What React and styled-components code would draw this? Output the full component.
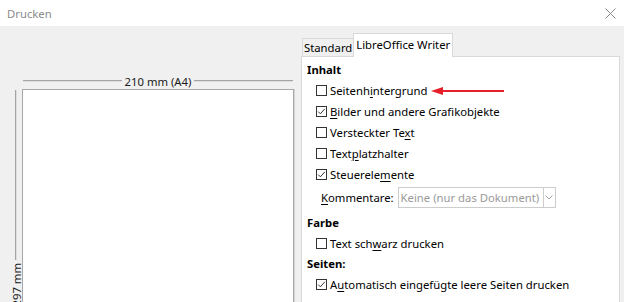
import React from "react";
import styled, { createGlobalStyle } from "styled-components";

const GlobalStyle = createGlobalStyle`
    html, body {
        margin: 0;
        padding: 0;
        background: #f0f0f0;
    }
    body {
        font-family: "Noto Sans", "Open Sans", sans-serif;
        font-size: 11.3px;
        color: #000000;
        overflow: hidden;
    }
`;

const WindowStyled = styled.div`
    width: 624px;
    height: 302px;
    display: flex;
    flex-direction: column;
    overflow: hidden;
    background: #f0f0f0;
`;

const TitleBar = styled.div`
    height: 26px;
    flex: none;
    background: #ffffff;
    display: flex;
    align-items: center;
    justify-content: space-between;
    padding: 0 8px 0 7px;
`;

const TitleText = styled.span`
    color: #8c8c8c;
    font-size: 11.3px;
`;

const BodyStyled = styled.div`
    flex: 1;
    min-height: 0;
    display: flex;
    gap: 7px;
    padding: 7px 4px 0 10px;
`;

const PreviewPane = styled.div`
    display: grid;
    grid-template-columns: 12px 272px;
    grid-template-rows: 16px auto;
    align-items: start;
    padding-top: 40px;
`;

const HDim = styled.div`
    grid-column: 2;
    grid-row: 1;
    height: 16px;
    display: flex;
    align-items: center;
    gap: 3px;
    padding: 0 1px;
    color: #1a1a1a;

    &::before, &::after {
        content: "";
        flex: 1;
        border-top: 1px solid #a4a4a4;
        border-bottom: 1px solid #dedede;
    }
`;

const VDim = styled.div`
    grid-column: 1;
    grid-row: 2;
    height: 216px;
    margin-top: 1px;
    display: flex;
    flex-direction: column;
    align-items: center;
    gap: 3px;
    color: #1a1a1a;

    &::before {
        content: "";
        flex: 1;
        border-left: 1px solid #a4a4a4;
        border-right: 1px solid #dedede;
    }
`;

const VDimText = styled.span`
    writing-mode: vertical-rl;
    transform: rotate(180deg);
    white-space: nowrap;
`;

const Page = styled.div`
    grid-column: 2;
    grid-row: 2;
    height: 400px;
    background: #ffffff;
    border: 1px solid #a8a8a8;
    box-shadow: 1px 0 0 #d4d4d4;
`;

const TabsPane = styled.div`
    flex: 1;
    display: flex;
    flex-direction: column;
    min-width: 0;
`;

const TabRow = styled.div`
    height: 23px;
    flex: none;
    display: flex;
    align-items: flex-end;
    padding-left: 1px;
`;

const Tab = styled.div`
    position: relative;
    z-index: 1;
    height: ${(p) => (p.$active ? "24px" : "18px")};
    margin-bottom: ${(p) => (p.$active ? "-1px" : "0")};
    background: ${(p) => (p.$active ? "#ffffff" : "#f0f0f0")};
    border: 1px solid #d9d9d9;
    border-bottom: none;
    border-right: ${(p) => (p.$active ? "1px solid #d9d9d9" : "none")};
    padding: ${(p) => (p.$active ? "2px 2px 0 2px" : "0 1px 0 1px")};
    box-sizing: border-box;
    line-height: 17px;
    white-space: nowrap;
`;

const TabPanel = styled.div`
    flex: 1;
    background: #ffffff;
    border: 1px solid #d9d9d9;
    border-bottom: none;
    padding: 3px 0 0 5px;
`;

const SectionTitle = styled.div`
    height: 20px;
    line-height: 20px;
    font-weight: 700;
    margin-top: ${(p) => p.$gap || "0"};
`;

const CheckRow = styled.div`
    height: 21px;
    display: flex;
    align-items: center;
    padding-left: 9px;
    white-space: nowrap;
`;

const Box = styled.span`
    width: 11px;
    height: 11px;
    box-sizing: border-box;
    border: 1px solid #333333;
    background: #ffffff;
    margin-right: 3px;
    flex: none;
    display: flex;
    align-items: center;
    justify-content: center;
`;

const Key = styled.u`
    text-decoration-thickness: 1px;
    text-underline-offset: 2px;
`;

const ComboRow = styled.div`
    height: 24px;
    display: flex;
    align-items: center;
    padding-left: 14px;
    white-space: nowrap;
`;

const Combo = styled.div`
    margin-left: 4px;
    width: 158px;
    height: 21px;
    box-sizing: border-box;
    border: 1px solid #cccccc;
    display: flex;
    align-items: stretch;
    color: #9a9a9a;
`;

const ComboText = styled.span`
    flex: 1;
    padding-left: 2px;
    line-height: 19px;
    overflow: hidden;
`;

const ComboButton = styled.span`
    width: 11px;
    flex: none;
    border-left: 1px solid #cccccc;
    display: flex;
    align-items: center;
    justify-content: center;
`;

const ArrowMark = styled.svg`
    margin-left: 4px;
    flex: none;
`;

const CheckBox = ({ checked }) => (
    <Box>
        {checked && (
            <svg width="9" height="9" viewBox="0 0 9 9">
                <polyline points="1.2,4.6 3.4,6.8 7.8,1.8" fill="none" stroke="#333" strokeWidth="1" />
            </svg>
        )}
    </Box>
);

const Option = ({ checked, children, extra }) => (
    <CheckRow>
        <CheckBox checked={checked} />
        <span>{children}</span>
        {extra}
    </CheckRow>
);

function App() {
    return (
        <>
            <GlobalStyle />
            <WindowStyled>
                <TitleBar>
                    <TitleText>Drucken</TitleText>
                    <svg width="11" height="11" viewBox="0 0 11 11">
                        <path d="M0.5 0.5 L10.5 10.5 M10.5 0.5 L0.5 10.5" stroke="#8a8a8a" strokeWidth="1" />
                    </svg>
                </TitleBar>
                <BodyStyled>
                    <PreviewPane>
                        <HDim>210 mm (A4)</HDim>
                        <VDim>
                            <VDimText>297 mm</VDimText>
                        </VDim>
                        <Page />
                    </PreviewPane>
                    <TabsPane>
                        <TabRow>
                            <Tab>Standard</Tab>
                            <Tab $active>LibreOffice Writer</Tab>
                        </TabRow>
                        <TabPanel>
                            <SectionTitle>Inhalt</SectionTitle>
                            <Option
                                extra={
                                    <ArrowMark width="73" height="10" viewBox="0 0 73 10">
                                        <polygon points="0,5 12,1 12,9" fill="#e5202a" />
                                        <line x1="10" y1="5" x2="73" y2="5" stroke="#e5202a" strokeWidth="2" />
                                    </ArrowMark>
                                }
                            >
                                Seitenh<Key>i</Key>ntergrund
                            </Option>
                            <Option checked><Key>B</Key>ilder und andere Grafikobjekte</Option>
                            <Option>Versteckter Te<Key>x</Key>t</Option>
                            <Option>Text<Key>p</Key>latzhalter</Option>
                            <Option checked>Steuerele<Key>m</Key>ente</Option>
                            <ComboRow>
                                <span><Key>K</Key>ommentare:</span>
                                <Combo>
                                    <ComboText>Keine (nur das Dokument)</ComboText>
                                    <ComboButton>
                                        <svg width="8" height="5" viewBox="0 0 8 5">
                                            <polyline points="0.5,0.5 4,4 7.5,0.5" fill="none" stroke="#a0a0a0" strokeWidth="1" />
                                        </svg>
                                    </ComboButton>
                                </Combo>
                            </ComboRow>
                            <SectionTitle $gap="4px">Farbe</SectionTitle>
                            <Option>Text sch<Key>w</Key>arz drucken</Option>
                            <SectionTitle>Seiten:</SectionTitle>
                            <Option checked>A<Key>u</Key>tomatisch eingefügte leere Seiten drucken</Option>
                        </TabPanel>
                    </TabsPane>
                </BodyStyled>
            </WindowStyled>
        </>
    );
}

export default App;
